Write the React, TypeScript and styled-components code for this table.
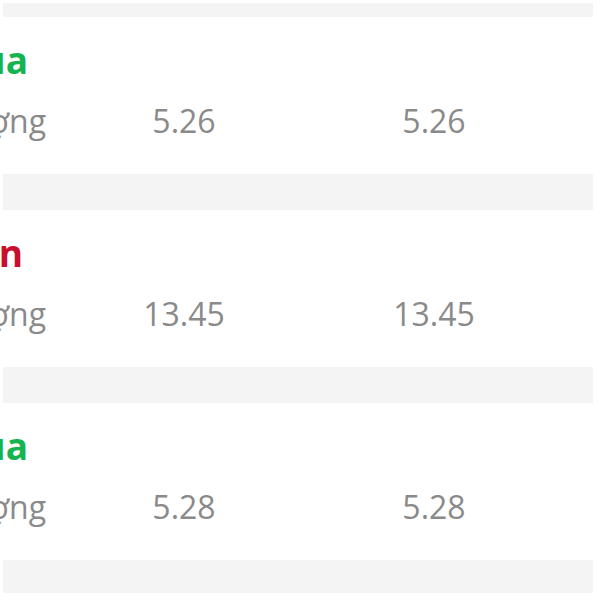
import React from "react";
import styled, { createGlobalStyle } from "styled-components";

const Global = createGlobalStyle`
  html, body { margin: 0; padding: 0; background: #ffffff; }
  body { font-family: "Open Sans", "Noto Sans", sans-serif; overflow: hidden; }
`;

const Page = styled.div`
  width: 600px;
  height: 600px;
  overflow: hidden;
  background: #ffffff;
  padding: 3px 0 0 3px;
  box-sizing: border-box;
`;

const List = styled.div`
  width: 590px;
  background: #f4f4f4;
  display: flex;
  flex-direction: column;
  gap: 36px;
  padding: 14px 0 33px;
`;

const Card = styled.div`
  background: #ffffff;
  display: grid;
  grid-template-columns: 56px 250px 250px;
  grid-template-rows: 48px 40px;
  row-gap: 17px;
  padding: 19px 0 33px;
`;

const LabelCell = styled.div<{ $end: number }>`
  display: flex;
  justify-content: flex-end;
  white-space: nowrap;
  padding-right: ${(p) => p.$end}px;
`;

const Side = styled.span<{ $tone: "buy" | "sell" }>`
  font-size: 37px;
  line-height: 48px;
  font-weight: 700;
  color: ${(p) => (p.$tone === "buy" ? "#16b351" : "#c8102e")};
`;

const Caption = styled.span`
  font-size: 32px;
  line-height: 40px;
  color: #8a8a8a;
`;

const Value = styled.div`
  font-size: 32px;
  line-height: 40px;
  color: #8a8a8a;
  text-align: center;
`;

type Row = { side: string; tone: "buy" | "sell"; end: number; a: string; b: string };

const rows: Row[] = [
  { side: "Mua", tone: "buy", end: 31, a: "5.26", b: "5.26" },
  { side: "Bán", tone: "sell", end: 36, a: "13.45", b: "13.45" },
  { side: "Mua", tone: "buy", end: 31, a: "5.28", b: "5.28" },
];

export default function App() {
  return (
    <Page>
      <Global />
      <List>
        {rows.map((r, i) => (
          <Card key={i}>
            <LabelCell $end={r.end}>
              <Side $tone={r.tone}>{r.side}</Side>
            </LabelCell>
            <div />
            <div />
            <LabelCell $end={13}>
              <Caption>Khối lượng</Caption>
            </LabelCell>
            <Value>{r.a}</Value>
            <Value>{r.b}</Value>
          </Card>
        ))}
      </List>
    </Page>
  );
}
